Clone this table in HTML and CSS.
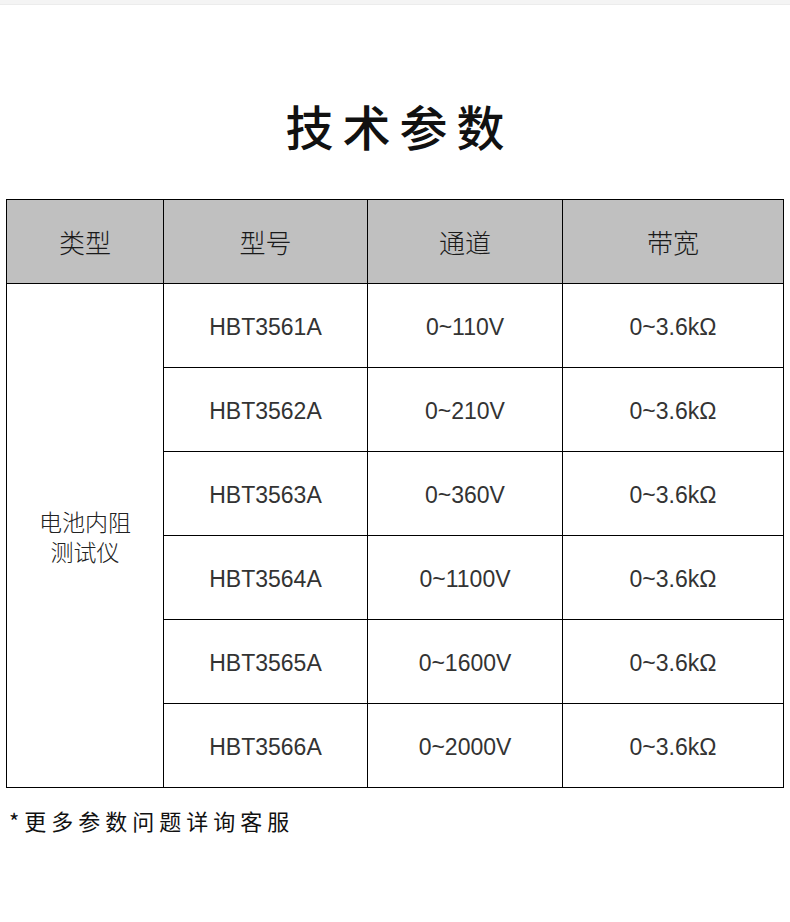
FILE: index.html
```html
<!DOCTYPE html>
<html lang="zh">
<head>
<meta charset="utf-8">
<link rel="stylesheet" href="styles.css">
</head>
<body>
<div class="topbar"></div>
<h1 class="title">技术参数</h1>
<table class="spec">
  <colgroup>
    <col class="c1"><col class="c2"><col class="c3"><col class="c4">
  </colgroup>
  <thead>
    <tr><th>类型</th><th>型号</th><th>通道</th><th>带宽</th></tr>
  </thead>
  <tbody>
    <tr><td rowspan="6" class="type"><span class="line">电池内阻</span><span class="line">测试仪</span></td><td>HBT3561A</td><td>0~110V</td><td>0~3.6kΩ</td></tr>
    <tr><td>HBT3562A</td><td>0~210V</td><td>0~3.6kΩ</td></tr>
    <tr><td>HBT3563A</td><td>0~360V</td><td>0~3.6kΩ</td></tr>
    <tr><td>HBT3564A</td><td>0~1100V</td><td>0~3.6kΩ</td></tr>
    <tr><td>HBT3565A</td><td>0~1600V</td><td>0~3.6kΩ</td></tr>
    <tr><td>HBT3566A</td><td>0~2000V</td><td>0~3.6kΩ</td></tr>
  </tbody>
</table>
<p class="note">*更多参数问题详询客服</p>
</body>
</html>
```
FILE: styles.css
```css
html, body {
  margin: 0;
  padding: 0;
  background: #ffffff;
}
body {
  width: 790px;
  font-family: "Liberation Sans", "Noto Sans CJK SC", sans-serif;
}
.topbar {
  height: 4px;
  background: #f4f4f4;
  border-bottom: 1px solid #ececec;
}
.title {
  margin: 0;
  padding: 87px 0 41px 9px;
  height: 66px;
  text-align: center;
  font-family: "Noto Sans CJK SC", sans-serif;
  font-size: 48px;
  font-weight: 500;
  letter-spacing: 9px;
  line-height: 66px;
  color: #111;
}
.spec {
  margin-left: 6px;
  width: 777px;
  border-collapse: collapse;
  table-layout: fixed;
}
.c1 { width: 157px; }
.c2 { width: 204px; }
.c3 { width: 195px; }
.c4 { width: 221px; }
.spec th, .spec td {
  border: 1px solid #000;
  height: 83px;
  padding: 0;
  text-align: center;
  vertical-align: middle;
}
.spec th {
  background: #c0c0c0;
  font-family: "Noto Sans CJK SC", serif;
  font-weight: 300;
  font-size: 26px;
  color: #1a1a1a;
}
.spec td {
  font-size: 23px;
  color: #333;
  height: 80px;
  padding-top: 3px;
}
.spec td.type {
  font-family: "Noto Sans CJK SC", sans-serif;
  font-weight: 300;
  font-size: 23px;
  line-height: 30px;
  color: #222;
  padding-top: 0;
}
.line {
  display: block;
}
.note {
  margin: 17px 0 0 9px;
  font-family: "Noto Sans CJK SC", sans-serif;
  font-size: 22px;
  letter-spacing: 5px;
  line-height: 30px;
  color: #111;
}
```
